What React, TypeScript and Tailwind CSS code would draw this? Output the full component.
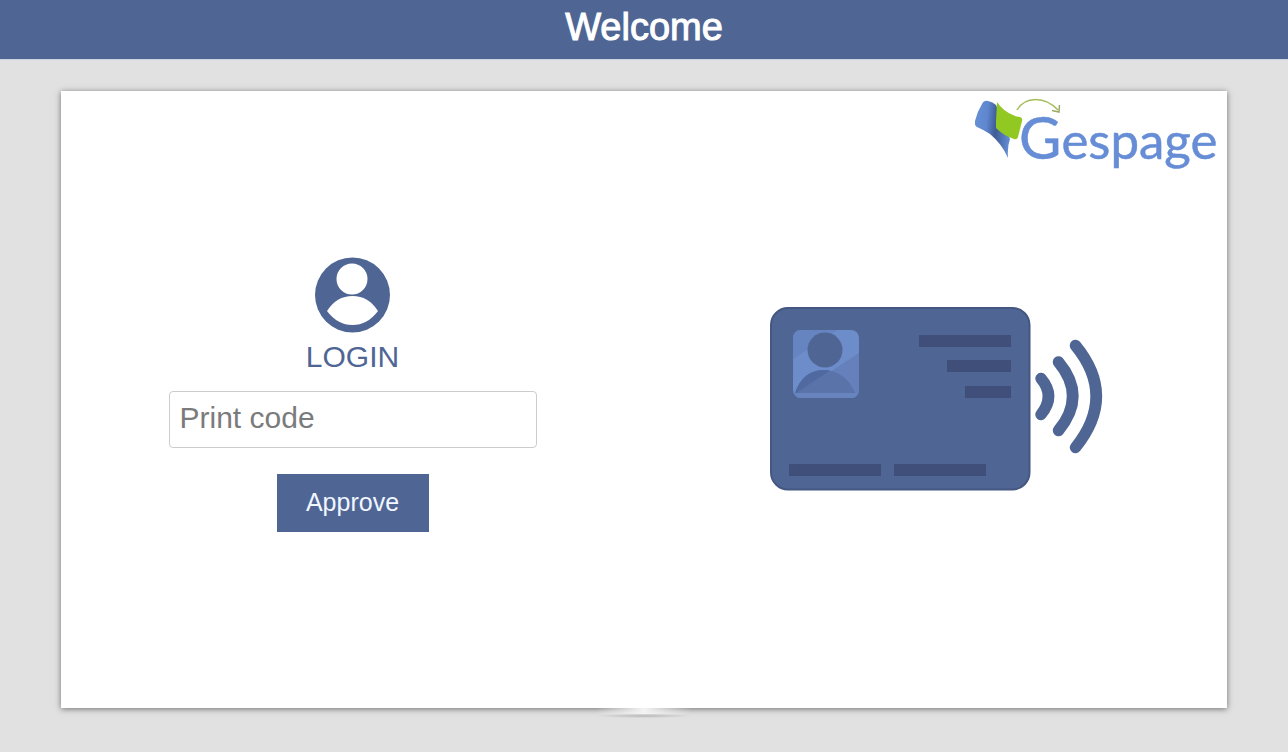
import { useState } from "react";

function GespageLogo() {
  return (
    <svg viewBox="0 0 244 76" className="h-[76px] w-[244px]" role="img" aria-label="Gespage">
      <defs>
        <linearGradient id="leaf" x1="0" y1="0.2" x2="1" y2="0.35">
          <stop offset="0" stopColor="#6690d6" />
          <stop offset="0.35" stopColor="#5f87cf" />
          <stop offset="0.62" stopColor="#3f5c93" />
          <stop offset="1" stopColor="#6089d0" />
        </linearGradient>
      </defs>
      <path
        d="M7 7Q9 3 13 4Q18 5 21 8L35 42Q32 50 33 61Q27 47 15 37Q9 33 2 30Q-1 28 0 24Q2 15 7 7Z"
        fill="url(#leaf)"
      />
      <path
        d="M22 5Q28 14 38 18Q42 20 45 20Q48 21 47 24L43 40Q42 43 39 42Q29 39 21 31Q21 28 21 24Z"
        fill="#92c822"
      />
      <path d="M42 13C50 -1 70 -1 83 13" fill="none" stroke="#a5bd5c" strokeWidth="1.5" />
      <path d="M77 13.500L84 15L84.500 8" fill="none" stroke="#9aab68" strokeWidth="1.500" />
      <text
        x="44"
        y="62"
        fill="#668dd5"
        stroke="#668dd5"
        strokeWidth="0.500"
        className="font-['Lato',sans-serif] text-[51px]"
      >
        <tspan className="text-[58px]">G</tspan>espage
      </text>
    </svg>
  );
}

function UserIcon() {
  return (
    <svg viewBox="0 0 76 76" className="size-[76px]" aria-hidden="true">
      <circle cx="37.500" cy="38" r="37.500" fill="#4f6695" />
      <circle cx="37" cy="22" r="15.500" fill="#fff" />
      <path d="M12 54Q21.500 39 37.500 39Q53.500 39 63 54Q52.500 68 37.500 68Q22.500 68 12 54Z" fill="#fff" />
    </svg>
  );
}

function BadgeIllustration() {
  return (
    <svg viewBox="0 0 334 184" className="w-[334px]" role="img" aria-label="Swipe your card">
      <defs>
        <clipPath id="photo">
          <rect x="24" y="23" width="66" height="68" rx="8" />
        </clipPath>
      </defs>
      <rect x="2" y="1" width="258.500" height="181.500" rx="17" fill="#4f6695" stroke="#445781" strokeWidth="2" />
      <g clipPath="url(#photo)">
        <rect x="24" y="23" width="66" height="68" fill="#6d8cca" />
        <path d="M24 52L69 23H24Z" fill="#6684c0" />
        <path d="M26 88L90 46V91H24Z" fill="#6580bb" />
        <path d="M26 86Q34 63 55 63Q77 64 86 86Z" fill="#5a73a9" />
        <path d="M26 86Q34 63 55 63L61 63.500L27 86Z" fill="#5069a0" />
        <path d="M24 86H90V91H24Z" fill="#6784bf" />
      </g>
      <circle cx="56" cy="43" r="17.500" fill="#4f6695" />
      <g fill="#404f7a">
        <rect x="150" y="28" width="92" height="12" />
        <rect x="178" y="53" width="64" height="12" />
        <rect x="196" y="79" width="46" height="12" />
        <rect x="20" y="157" width="92" height="12" />
        <rect x="125" y="157" width="92" height="12" />
      </g>
      <g fill="none" stroke="#4f6695" strokeWidth="11.500" strokeLinecap="round">
        <path d="M272 71.500Q287 89 272 107.500" />
        <path d="M289.500 55Q318 89 289.500 123.500" />
        <path d="M306.500 38.500Q348 89 306.500 140.500" />
      </g>
    </svg>
  );
}

export default function App() {
  const [code, setCode] = useState("");

  return (
    <div className="flex min-h-screen flex-col bg-[#e1e1e1] font-['Liberation_Sans',Arial,sans-serif]">
      <header className="flex h-[59px] items-start justify-center bg-[#4f6695] pt-1 shadow-[0_1px_1px_#ccd3e0]">
        <h1 className="text-[38px] leading-[46px] text-white [-webkit-text-stroke:1px_white]">Welcome</h1>
      </header>

      <main className="flex flex-1 flex-col px-[61px] pt-8 pb-[38px]">
        <section className="relative grid flex-1 grid-cols-2 bg-white shadow-[0_1px_6px_rgba(0,0,0,0.5)]">
          <div className="absolute top-[6px] right-2">
            <GespageLogo />
          </div>

          <form
            className="flex flex-col items-center justify-center pb-[10px]"
            onSubmit={(e) => e.preventDefault()}
          >
            <UserIcon />
            <label htmlFor="code" className="mt-1 text-[30px] leading-[40px] text-[#4f6695]">
              LOGIN
            </label>
            <input
              id="code"
              type="text"
              value={code}
              onChange={(e) => setCode(e.target.value)}
              placeholder="Print code"
              className="mt-[14px] h-[57px] w-[368px] rounded border border-[#ccc] px-[10px] pb-1 text-[30px] text-gray-700 placeholder:text-[#7b7b7b]"
            />
            <button type="submit" className="mt-[26px] h-[58px] w-[152px] bg-[#4f6695] text-[25px] text-[#f1f6ff]">
              Approve
            </button>
          </form>

          <div className="flex items-center justify-center pb-[2px]">
            <BadgeIllustration />
          </div>
        </section>
        <div className="relative mx-auto h-[6px] w-24 bg-linear-to-r from-transparent via-[#f3f3f3] to-transparent">
          <div className="absolute inset-x-0 top-full h-1 bg-radial from-[#b8b8b8] to-transparent to-70%" />
        </div>
      </main>
    </div>
  );
}
